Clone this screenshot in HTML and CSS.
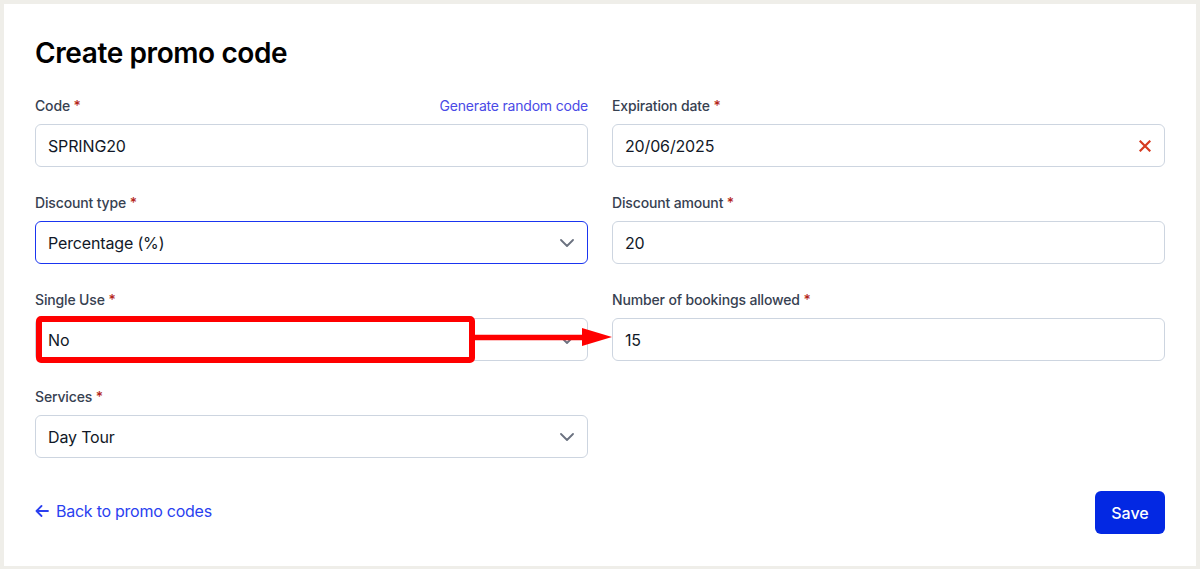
FILE: index.html
```html
<!DOCTYPE html>
<html lang="en">
<head>
<meta charset="utf-8">
<title>Create promo code</title>
<link rel="stylesheet" href="styles.css">
</head>
<body>
<div class="page">
  <main class="card">
    <h1 class="title">Create promo code</h1>
    <form class="form-grid">
      <div class="field">
        <div class="label-row">
          <label class="label">Code <span class="req">*</span></label>
          <a class="link-small" href="#">Generate random code</a>
        </div>
        <div class="input"><span class="value">SPRING20</span></div>
      </div>
      <div class="field">
        <div class="label-row">
          <label class="label">Expiration date <span class="req">*</span></label>
        </div>
        <div class="input">
          <span class="value">20/06/2025</span>
          <svg class="clear-icon" width="12" height="12" viewBox="0 0 12 12"><path d="M1.5 1.5L10.5 10.5M10.5 1.5L1.5 10.5" stroke="#d63a1f" stroke-width="2.2" stroke-linecap="square"/></svg>
        </div>
      </div>
      <div class="field">
        <div class="label-row">
          <label class="label">Discount type <span class="req">*</span></label>
        </div>
        <div class="input focused">
          <span class="value">Percentage (%)</span>
          <svg class="chevron" width="14" height="8" viewBox="0 0 14 8"><path d="M1 1L7 7L13 1" fill="none" stroke="#6b7280" stroke-width="1.8" stroke-linecap="round" stroke-linejoin="round"/></svg>
        </div>
      </div>
      <div class="field">
        <div class="label-row">
          <label class="label">Discount amount <span class="req">*</span></label>
        </div>
        <div class="input"><span class="value">20</span></div>
      </div>
      <div class="field">
        <div class="label-row">
          <label class="label">Single Use <span class="req">*</span></label>
        </div>
        <div class="input">
          <span class="value">No</span>
          <svg class="chevron" width="14" height="8" viewBox="0 0 14 8"><path d="M1 1L7 7L13 1" fill="none" stroke="#6b7280" stroke-width="1.8" stroke-linecap="round" stroke-linejoin="round"/></svg>
        </div>
      </div>
      <div class="field">
        <div class="label-row">
          <label class="label">Number of bookings allowed <span class="req">*</span></label>
        </div>
        <div class="input"><span class="value">15</span></div>
      </div>
      <div class="field">
        <div class="label-row">
          <label class="label">Services <span class="req">*</span></label>
        </div>
        <div class="input">
          <span class="value">Day Tour</span>
          <svg class="chevron" width="14" height="8" viewBox="0 0 14 8"><path d="M1 1L7 7L13 1" fill="none" stroke="#6b7280" stroke-width="1.8" stroke-linecap="round" stroke-linejoin="round"/></svg>
        </div>
      </div>
    </form>
    <div class="footer">
      <a class="back-link" href="#">
        <svg class="back-arrow" width="14" height="12" viewBox="0 0 14 12"><path d="M13 6H1.5M6.5 1L1.5 6L6.5 11" fill="none" stroke="#2a3ff0" stroke-width="1.8" stroke-linecap="round" stroke-linejoin="round"/></svg>
        <span>Back to promo codes</span>
      </a>
      <button class="save-btn" type="button">Save</button>
    </div>
  </main>
</div>
<svg class="annotation" width="1200" height="569" viewBox="0 0 1200 569">
  <rect x="39" y="319" width="433" height="41" rx="2" fill="none" stroke="#ff0000" stroke-width="6"/>
  <path d="M472 337.5L586 337.5" stroke="#ff0000" stroke-width="5.5"/>
  <polygon points="582,328 612,337 582,346" fill="#ff0000"/>
</svg>
</body>
</html>
```

FILE: styles.css
```css
* { box-sizing: border-box; }

html, body {
  margin: 0;
  padding: 0;
}

body {
  background: #efeee9;
  font-family: Inter, "Noto Sans", "Liberation Sans", sans-serif;
  color: #111827;
  width: 1200px;
  height: 569px;
  position: relative;
  overflow: hidden;
}

.page {
  padding: 4px;
}

.card {
  background: #ffffff;
  height: 562px;
  padding: 32px 31px 32px 31px;
  display: flex;
  flex-direction: column;
}

.title {
  margin: 0 0 26px 0;
  font-size: 28px;
  line-height: 34px;
  font-weight: 600;
  color: #000000;
  letter-spacing: -0.4px;
}

.form-grid {
  display: grid;
  grid-template-columns: 553px 553px;
  column-gap: 24px;
  row-gap: 26px;
  margin: 0;
}

.field {
  display: flex;
  flex-direction: column;
}

.label-row {
  display: flex;
  justify-content: space-between;
  align-items: center;
  height: 20px;
  margin-bottom: 8px;
}

.label {
  font-size: 14px;
  line-height: 20px;
  font-weight: 500;
  color: #374151;
  letter-spacing: -0.15px;
}

.req {
  color: #b4261a;
}

.link-small {
  font-size: 14px;
  line-height: 20px;
  color: #4a4ae6;
  text-decoration: none;
  letter-spacing: -0.2px;
}

.input {
  height: 43px;
  border: 1px solid #cdd5e0;
  border-radius: 6px;
  padding: 0 12px;
  display: flex;
  align-items: center;
  justify-content: space-between;
  font-size: 16px;
  color: #111827;
  letter-spacing: -0.15px;
}

.input.focused {
  border-color: #1a35f0;
}

.value {
  line-height: 20px;
}

.chevron {
  margin-right: 1px;
}

.clear-icon {
  margin-right: 1px;
}

.footer {
  display: flex;
  justify-content: space-between;
  align-items: center;
  margin-top: 33px;
}

.back-link {
  display: flex;
  align-items: center;
  gap: 7px;
  font-size: 16px;
  line-height: 20px;
  color: #2a3ff0;
  text-decoration: none;
  letter-spacing: -0.25px;
  padding-bottom: 3px;
}

.save-btn {
  width: 70px;
  height: 43px;
  border: none;
  border-radius: 6px;
  background: #0328e3;
  color: #ffffff;
  font-family: Inter, "Noto Sans", "Liberation Sans", sans-serif;
  font-size: 16px;
  font-weight: 500;
  cursor: pointer;
}

.annotation {
  position: absolute;
  top: 0;
  left: 0;
  pointer-events: none;
}
```
